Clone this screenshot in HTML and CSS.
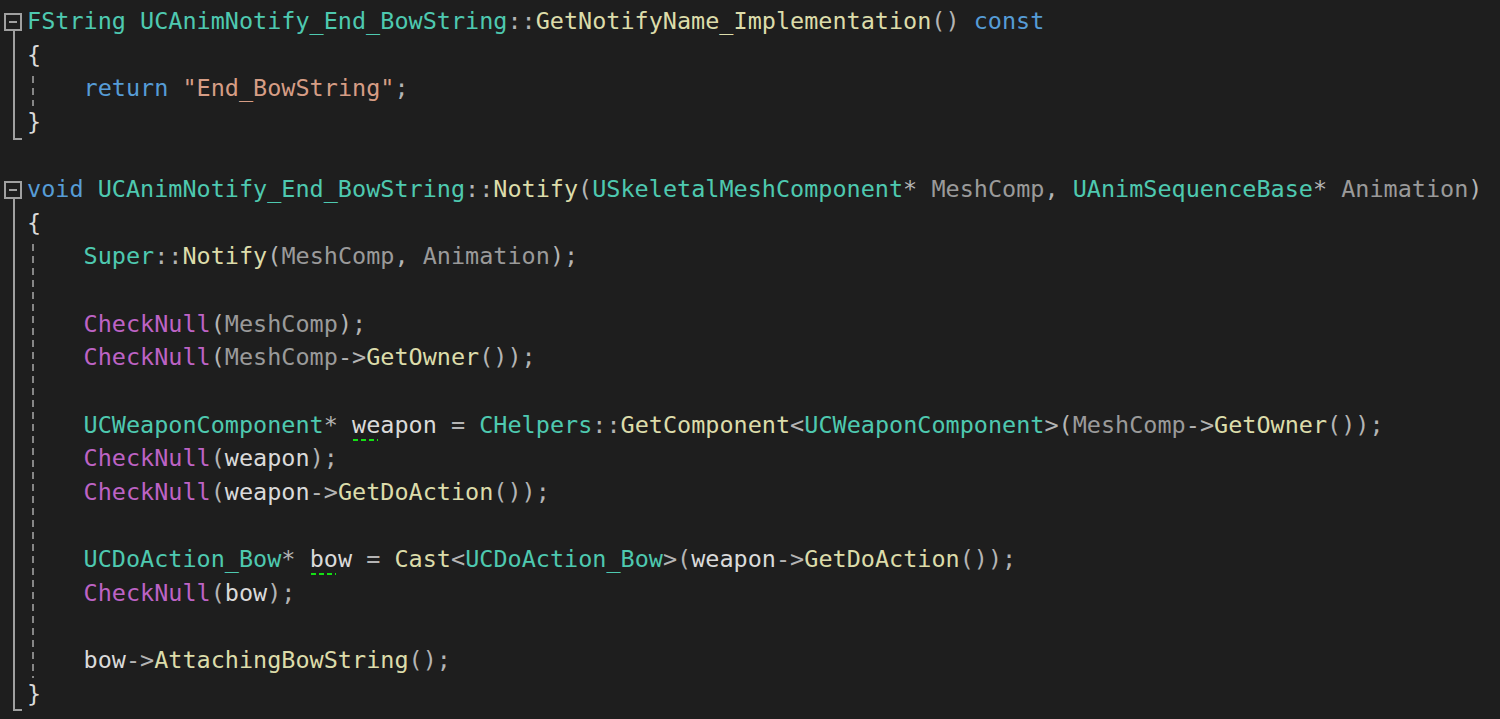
FILE: index.html
```html
<!DOCTYPE html>
<html lang="en">
<head>
<meta charset="utf-8">
<title>UCAnimNotify_End_BowString.cpp</title>
<link rel="stylesheet" href="styles.css">
</head>
<body>
<main class="editor">
  <section class="fn">
    <div class="gutter"><span class="fold-box"><span class="minus"></span></span><span class="rail"></span></div>
    <div class="code">
      <div class="ln"><span class="ty">FString</span> <span class="ty">UCAnimNotify_End_BowString</span><span class="p">::</span><span class="fu">GetNotifyName_Implementation</span><span class="p">()</span> <span class="kw">const</span></div>
      <div class="ln"><span class="br">{</span></div>
      <div class="body">
        <div class="ln">    <span class="kw">return</span> <span class="st">"End_BowString"</span><span class="p">;</span></div>
      </div>
      <div class="ln"><span class="br">}</span></div>
    </div>
  </section>
  <div class="ln"></div>
  <section class="fn">
    <div class="gutter"><span class="fold-box"><span class="minus"></span></span><span class="rail"></span></div>
    <div class="code">
      <div class="ln"><span class="kw">void</span> <span class="ty">UCAnimNotify_End_BowString</span><span class="p">::</span><span class="fu">Notify</span><span class="p">(</span><span class="ty">USkeletalMeshComponent</span><span class="p">*</span> <span class="pa">MeshComp</span><span class="p">,</span> <span class="ty">UAnimSequenceBase</span><span class="p">*</span> <span class="pa">Animation</span><span class="p">)</span></div>
      <div class="ln"><span class="br">{</span></div>
      <div class="body">
        <div class="ln">    <span class="ty">Super</span><span class="p">::</span><span class="fu">Notify</span><span class="p">(</span><span class="pa">MeshComp</span><span class="p">,</span> <span class="pa">Animation</span><span class="p">);</span></div>
        <div class="ln"></div>
        <div class="ln">    <span class="ma">CheckNull</span><span class="p">(</span><span class="pa">MeshComp</span><span class="p">);</span></div>
        <div class="ln">    <span class="ma">CheckNull</span><span class="p">(</span><span class="pa">MeshComp</span><span class="p">-&gt;</span><span class="fu">GetOwner</span><span class="p">());</span></div>
        <div class="ln"></div>
        <div class="ln">    <span class="ty">UCWeaponComponent</span><span class="p">*</span> <span class="va"><span class="sq">we</span>apon</span> <span class="p">=</span> <span class="ty">CHelpers</span><span class="p">::</span><span class="fu">GetComponent</span><span class="p">&lt;</span><span class="ty">UCWeaponComponent</span><span class="p">&gt;(</span><span class="pa">MeshComp</span><span class="p">-&gt;</span><span class="fu">GetOwner</span><span class="p">());</span></div>
        <div class="ln">    <span class="ma">CheckNull</span><span class="p">(</span><span class="va">weapon</span><span class="p">);</span></div>
        <div class="ln">    <span class="ma">CheckNull</span><span class="p">(</span><span class="va">weapon</span><span class="p">-&gt;</span><span class="fu">GetDoAction</span><span class="p">());</span></div>
        <div class="ln"></div>
        <div class="ln">    <span class="ty">UCDoAction_Bow</span><span class="p">*</span> <span class="va"><span class="sq">bo</span>w</span> <span class="p">=</span> <span class="fu">Cast</span><span class="p">&lt;</span><span class="ty">UCDoAction_Bow</span><span class="p">&gt;(</span><span class="va">weapon</span><span class="p">-&gt;</span><span class="fu">GetDoAction</span><span class="p">());</span></div>
        <div class="ln">    <span class="ma">CheckNull</span><span class="p">(</span><span class="va">bow</span><span class="p">);</span></div>
        <div class="ln"></div>
        <div class="ln">    <span class="va">bow</span><span class="p">-&gt;</span><span class="fu">AttachingBowString</span><span class="p">();</span></div>
      </div>
      <div class="ln"><span class="br">}</span></div>
    </div>
  </section>
</main>
</body>
</html>
```

FILE: styles.css
```css
html, body {
  margin: 0;
  padding: 0;
  background: #1e1e1e;
  height: 100%;
  overflow: hidden;
}

.editor {
  padding-top: 5px;
  font-family: "DejaVu Sans Mono", "Liberation Mono", monospace;
  font-size: 23.47px;
  color: #dadada;
}

.ln {
  height: 33.65px;
  line-height: 33.65px;
  white-space: pre;
}

.fn {
  display: flex;
}

.gutter {
  width: 27px;
  flex: none;
  display: flex;
  flex-direction: column;
}

.fold-box {
  box-sizing: border-box;
  width: 18px;
  height: 18px;
  margin: 8px 0 0 4px;
  border: 2px solid #a0a0a0;
  display: flex;
  align-items: center;
  justify-content: center;
}

.minus {
  width: 8px;
  height: 2px;
  background: #a0a0a0;
}

.rail {
  flex: 1;
  box-sizing: border-box;
  width: 9px;
  margin-left: 13px;
  border-left: 2px solid #a0a0a0;
  border-bottom: 2px solid #a0a0a0;
}

.code {
  flex: 1;
  min-width: 0;
}

.body {
  background-image: repeating-linear-gradient(to bottom, transparent 0 4.5px, #868686 4.5px 11.5px, transparent 11.5px 12px);
  background-repeat: no-repeat;
  background-position: 5px 0;
  background-size: 2px 100%;
}

.ty { color: #4ec9b0; }
.kw { color: #569cd6; }
.fu { color: #dcdcaa; }
.st { color: #d69d85; }
.p  { color: #b4b4b4; }
.br { color: #dadada; }
.pa { color: #9a9a9a; }
.ma { color: #bd63c5; }
.va { color: #dadada; }

.sq {
  position: relative;
}

.sq::after {
  content: "";
  position: absolute;
  left: 1px;
  width: 25px;
  bottom: -2px;
  height: 2px;
  background: repeating-linear-gradient(to right, #14e014 0 5px, transparent 5px 8px);
}
```
